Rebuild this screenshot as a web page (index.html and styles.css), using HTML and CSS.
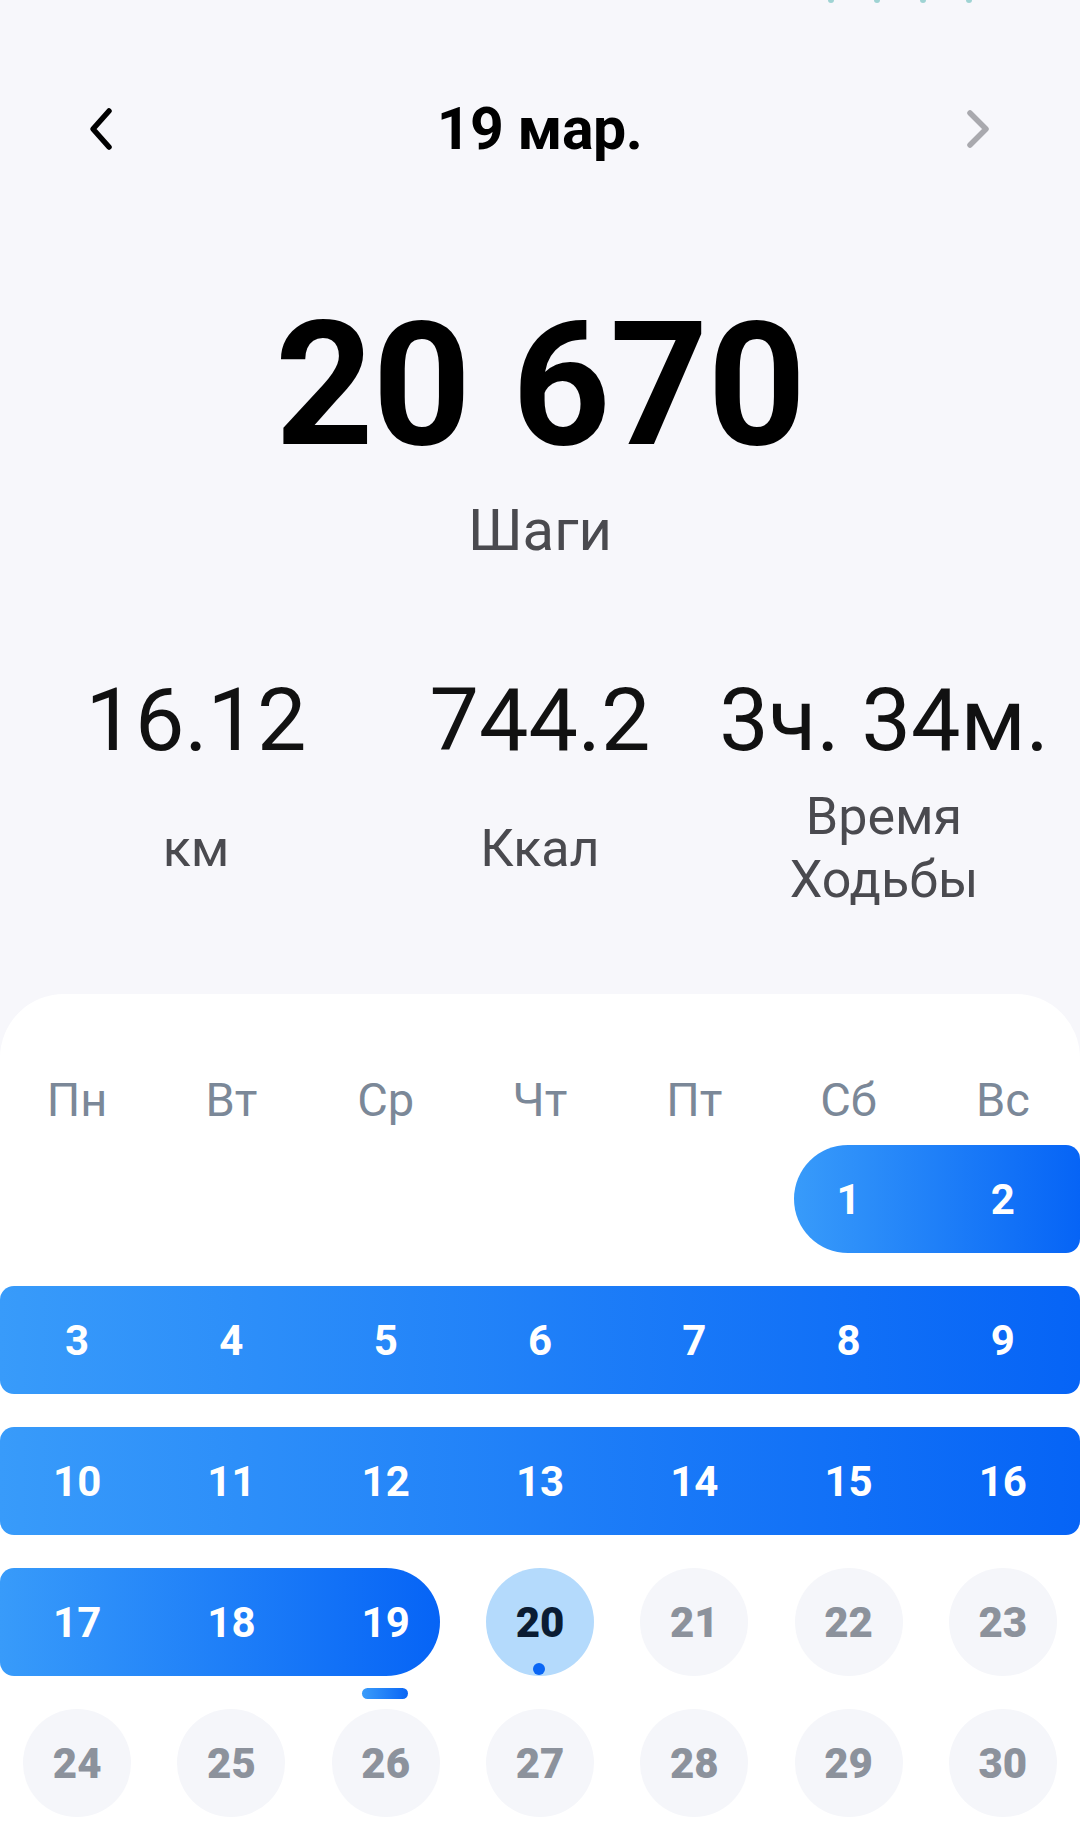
FILE: index.html
```html
<!DOCTYPE html>
<html>
<head>
    <title>Шаги</title>
    <link rel="stylesheet" href="styles.css">
</head>
<body>
    <div class="status">
        <span></span><span></span><span></span><span></span>
    </div>

    <div class="header">
        <svg class="arrow" width="40" height="50" viewBox="0 0 40 50">
            <polyline points="28,7 12,25 28,43" fill="none" stroke="#000" stroke-width="5.5" stroke-linecap="round" stroke-linejoin="round"/>
        </svg>
        <div class="date">19 мар.</div>
        <svg class="arrow" width="40" height="50" viewBox="0 0 40 50">
            <polyline points="12,9 28,25 12,41" fill="none" stroke="#a9a9ae" stroke-width="5.5" stroke-linecap="round" stroke-linejoin="round"/>
        </svg>
    </div>

    <div class="steps">20 670</div>
    <div class="steps-label">Шаги</div>

    <div class="stats">
        <div class="stat-value">16.12</div>
        <div class="stat-value">744.2</div>
        <div class="stat-value">3ч. 34м.</div>
        <div class="stat-label">км</div>
        <div class="stat-label">Ккал</div>
        <div class="stat-label">Время<br>Ходьбы</div>
    </div>

    <div class="calendar">
        <div class="weekdays">
            <div>Пн</div><div>Вт</div><div>Ср</div><div>Чт</div><div>Пт</div><div>Сб</div><div>Вс</div>
        </div>

        <div class="week">
            <div class="range start" style="grid-column: 6 / 8"></div>
            <span></span><span></span><span></span><span></span><span></span>
            <span class="day on">1</span><span class="day on">2</span>
        </div>

        <div class="week">
            <div class="range" style="grid-column: 1 / 8"></div>
            <span class="day on">3</span><span class="day on">4</span><span class="day on">5</span><span class="day on">6</span><span class="day on">7</span><span class="day on">8</span><span class="day on">9</span>
        </div>

        <div class="week">
            <div class="range" style="grid-column: 1 / 8"></div>
            <span class="day on">10</span><span class="day on">11</span><span class="day on">12</span><span class="day on">13</span><span class="day on">14</span><span class="day on">15</span><span class="day on">16</span>
        </div>

        <div class="week">
            <div class="range end" style="grid-column: 1 / 4"></div>
            <span class="day on">17</span><span class="day on">18</span>
            <span class="day on selected">19<i class="bar"></i></span>
            <span class="day"><b class="circle today">20<i class="dot"></i></b></span>
            <span class="day"><b class="circle">21</b></span>
            <span class="day"><b class="circle">22</b></span>
            <span class="day"><b class="circle">23</b></span>
        </div>

        <div class="week">
            <span class="day"><b class="circle">24</b></span>
            <span class="day"><b class="circle">25</b></span>
            <span class="day"><b class="circle">26</b></span>
            <span class="day"><b class="circle">27</b></span>
            <span class="day"><b class="circle">28</b></span>
            <span class="day"><b class="circle">29</b></span>
            <span class="day"><b class="circle">30</b></span>
        </div>
    </div>
</body>
</html>
```

FILE: styles.css
```css
* {
    box-sizing: border-box;
    margin: 0px;
}

body {
    background: #f7f7fb;
    font-family: Roboto, "Noto Sans", sans-serif;
    color: #000;
    width: 1080px;
}

.status {
    display: flex;
    gap: 40px;
    padding-left: 828px;
    height: 4px;
}

.status span {
    width: 6px;
    height: 3px;
    border-radius: 0 0 3px 3px;
    background: #9fd3d3;
}

.header {
    display: flex;
    align-items: center;
    justify-content: space-between;
    padding: 0 82px 0 81px;
    margin-top: 90px;
    height: 70px;
}

.date {
    font-size: 59px;
    font-weight: 700;
    line-height: 70px;
    letter-spacing: -0.5px;
}

.steps {
    margin-top: 135px;
    text-align: center;
    font-size: 172px;
    font-weight: 700;
    line-height: 172px;
    letter-spacing: -1px;
}

.steps-label {
    margin-top: 24px;
    text-align: center;
    font-size: 58px;
    line-height: 70px;
    color: #4a4a4f;
}

.stats {
    display: grid;
    grid-template-columns: repeat(3, 1fr);
    align-items: center;
    padding: 0 24px;
    margin-top: 105px;
}

.stat-value {
    text-align: center;
    font-size: 88px;
    line-height: 100px;
    white-space: nowrap;
    color: #111;
}

.stat-label {
    margin-top: 15px;
    text-align: center;
    font-size: 52px;
    line-height: 63px;
    color: #4a4a4f;
}

.calendar {
    margin-top: 83px;
    background: #fff;
    border-radius: 64px 64px 0 0;
    padding-top: 78px;
    min-height: 860px;
}

.weekdays {
    display: grid;
    grid-template-columns: repeat(7, 1fr);
    text-align: center;
    font-size: 47px;
    line-height: 56px;
    color: #7b8898;
}

.week {
    display: grid;
    grid-template-columns: repeat(7, 1fr);
    grid-template-rows: 108px;
    margin-top: 33px;
}

.weekdays + .week {
    margin-top: 17px;
}

.range {
    grid-row: 1;
    background: linear-gradient(90deg, #389bfa, #0664f6);
    border-radius: 14px;
}

.range.start {
    margin-left: 23px;
    border-radius: 54px 14px 14px 54px;
}

.range.end {
    margin-right: 23px;
    border-radius: 14px 54px 54px 14px;
}

.week span {
    grid-row: 1;
}

.week span:nth-of-type(1) { grid-column: 1; }
.week span:nth-of-type(2) { grid-column: 2; }
.week span:nth-of-type(3) { grid-column: 3; }
.week span:nth-of-type(4) { grid-column: 4; }
.week span:nth-of-type(5) { grid-column: 5; }
.week span:nth-of-type(6) { grid-column: 6; }
.week span:nth-of-type(7) { grid-column: 7; }

.day {
    display: flex;
    align-items: center;
    justify-content: center;
    font-size: 42px;
    font-weight: 700;
    color: #8c929c;
    position: relative;
}

.day.on {
    color: #fff;
}

.circle {
    width: 108px;
    height: 108px;
    border-radius: 50%;
    background: #f5f6fa;
    display: flex;
    align-items: center;
    justify-content: center;
    position: relative;
}

.circle.today {
    background: #b4dafc;
    color: #0b1c33;
}

.dot {
    position: absolute;
    bottom: 1px;
    left: 47px;
    width: 12px;
    height: 12px;
    border-radius: 50%;
    background: #0a66f5;
}

.bar {
    position: absolute;
    bottom: -23px;
    left: 53px;
    width: 46px;
    height: 11px;
    border-radius: 6px;
    background: linear-gradient(90deg, #3a9cfa, #0a66f5);
}
```
